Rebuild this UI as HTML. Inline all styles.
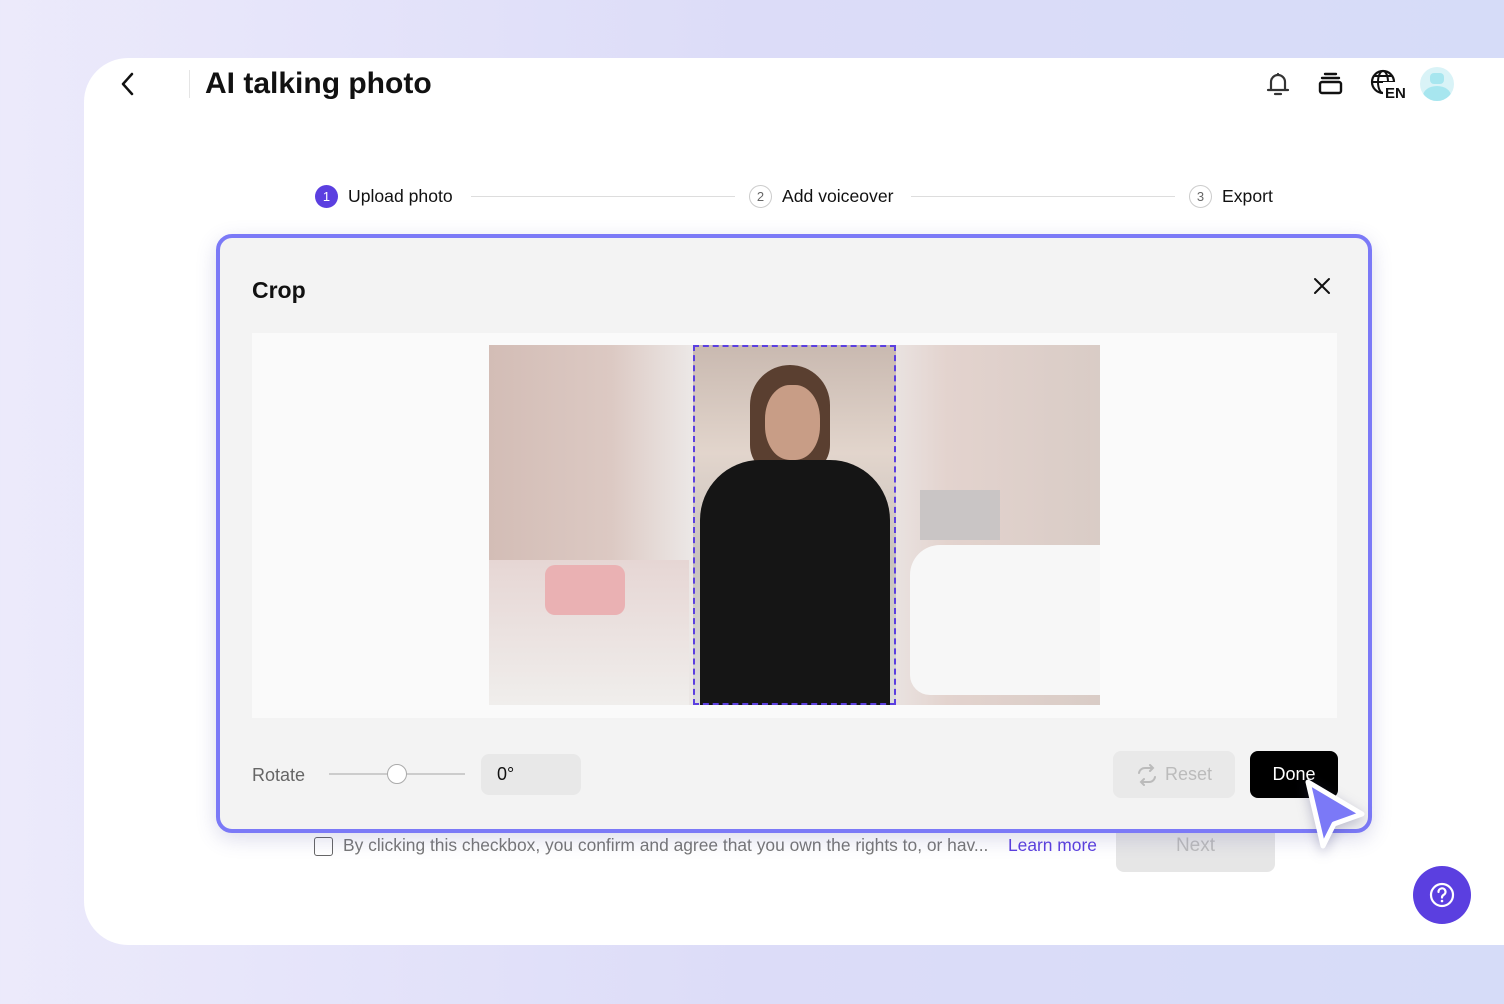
<!DOCTYPE html>
<html><head><style>
*{margin:0;padding:0;box-sizing:border-box}
body{width:1504px;height:1004px;overflow:hidden;font-family:"Liberation Sans",sans-serif;background:linear-gradient(90deg,#eceafb,#dcdcf8 50%,#d6dcf8);position:relative}
.card{position:absolute;left:84px;top:58px;width:1440px;height:887px;background:#fff;border-radius:44px 0 0 44px}
.abs{position:absolute}
</style></head><body>
<div class="card"></div>
<svg class="abs" style="left:118px;top:70px" width="22" height="28"><path d="M14 4 L5 14 L14 24" stroke="#111" stroke-width="2.5" fill="none" stroke-linecap="round" stroke-linejoin="round"/></svg>
<div class="abs" style="left:189px;top:70px;width:1px;height:28px;background:#e5e5e5"></div>
<div class="abs" style="left:205px;top:67px;font-size:30px;font-weight:bold;color:#111">AI talking photo</div>
<svg class="abs" style="left:1264px;top:70px" width="28" height="28"><path d="M7 20 V12 a7 7 0 0 1 14 0 V20 H24 M4 20 H24 M11 24 H17 M14 4 V5" stroke="#333" stroke-width="2.2" fill="none" stroke-linecap="round"/></svg>
<svg class="abs" style="left:1318px;top:72px" width="26" height="24"><rect x="2" y="10" width="21" height="11" rx="2" stroke="#111" stroke-width="2.4" fill="none"/><path d="M4 6 H21 M7 2 H18" stroke="#111" stroke-width="2.4" stroke-linecap="round"/></svg>
<svg class="abs" style="left:1369px;top:68px" width="40" height="32"><circle cx="14" cy="14" r="11" stroke="#111" stroke-width="2.2" fill="none"/><ellipse cx="14" cy="14" rx="5" ry="11" stroke="#111" stroke-width="2" fill="none"/><path d="M3 14 H25 M5 8 H23" stroke="#111" stroke-width="2"/><rect x="14" y="14" width="26" height="18" fill="#fff"/><text x="16" y="30" font-family="Liberation Sans" font-weight="bold" font-size="15" fill="#111">EN</text></svg>
<div class="abs" style="left:1420px;top:67px;width:34px;height:34px;border-radius:50%;background:#d9f3f7;overflow:hidden"><div class="abs" style="left:10px;top:6px;width:14px;height:11px;border-radius:4px;background:#a7e6ef"></div><div class="abs" style="left:3px;top:19px;width:28px;height:20px;border-radius:50%;background:#a7e6ef"></div></div>

<div class="abs" style="left:315px;top:185px;width:23px;height:23px;border-radius:50%;background:#5b3fe0;color:#fff;font-size:13px;text-align:center;line-height:23px">1</div>
<div class="abs" style="left:348px;top:186px;font-size:17.6px;color:#111">Upload photo</div>
<div class="abs" style="left:471px;top:196px;width:264px;height:1px;background:#ddd"></div>
<div class="abs" style="left:749px;top:185px;width:23px;height:23px;border-radius:50%;border:1px solid #ccc;color:#666;font-size:13px;text-align:center;line-height:21px">2</div>
<div class="abs" style="left:782px;top:186px;font-size:17.6px;color:#111">Add voiceover</div>
<div class="abs" style="left:911px;top:196px;width:264px;height:1px;background:#ddd"></div>
<div class="abs" style="left:1189px;top:185px;width:23px;height:23px;border-radius:50%;border:1px solid #ccc;color:#666;font-size:13px;text-align:center;line-height:21px">3</div>
<div class="abs" style="left:1222px;top:186px;font-size:17.6px;color:#111">Export</div>

<div class="abs" style="left:314px;top:837px;width:19px;height:19px;border:1.5px solid #666;border-radius:3px"></div>
<div class="abs" style="left:343px;top:835px;font-size:17.4px;color:#777">By clicking this checkbox, you confirm and agree that you own the rights to, or hav...</div>
<div class="abs" style="left:1008px;top:835px;font-size:17.4px;color:#5b3fe0">Learn more</div>
<div class="abs" style="left:1116px;top:818px;width:159px;height:54px;border-radius:8px;background:#e6e6e6;color:#bbb;font-size:19px;text-align:center;line-height:56px">Next</div>

<div class="abs" style="left:216px;top:234px;width:1156px;height:599px;border:4px solid #7b79f7;border-radius:16px;background:#f3f3f3;box-shadow:0 6px 20px rgba(80,80,160,.2)"></div>
<div class="abs" style="left:252px;top:277px;font-size:23px;font-weight:bold;color:#111">Crop</div>
<svg class="abs" style="left:1312px;top:276px" width="20" height="20"><path d="M3 3 L17 17 M17 3 L3 17" stroke="#111" stroke-width="2" stroke-linecap="round"/></svg>
<div class="abs" style="left:252px;top:333px;width:1085px;height:385px;background:#fafafa"></div>
<div class="abs" style="left:489px;top:345px;width:611px;height:360px;background:linear-gradient(90deg,#d3bdb6 0%,#dcc9c3 20%,#eeeceb 35%,#eee 60%,#e3d3ce 75%,#d9ccc6 100%)"></div>
<div class="abs" style="left:489px;top:560px;width:200px;height:145px;background:linear-gradient(180deg,#e6d6d4,#f0eeec)"></div>
<div class="abs" style="left:545px;top:565px;width:80px;height:50px;border-radius:10px;background:#eab1b3"></div>
<div class="abs" style="left:910px;top:545px;width:190px;height:150px;border-radius:30px 0 0 20px;background:#f7f7f7"></div>
<div class="abs" style="left:920px;top:490px;width:80px;height:50px;background:#c9c5c5"></div>
<div class="abs" style="left:693px;top:345px;width:203px;height:360px;background:linear-gradient(180deg,#c9b9b0 0%,#e2d5cc 30%,#c8c2bd 60%,#ddd 100%)"></div>
<div class="abs" style="left:750px;top:365px;width:80px;height:110px;border-radius:40px 40px 30px 30px;background:#5a3f30"></div>
<div class="abs" style="left:765px;top:385px;width:55px;height:75px;border-radius:45%;background:#c89d86"></div>
<div class="abs" style="left:700px;top:460px;width:190px;height:245px;border-radius:60px 60px 0 0;background:#151515"></div>
<div class="abs" style="left:693px;top:345px;width:203px;height:360px;border:2px dashed #5b3fe0"></div>
<div class="abs" style="left:252px;top:765px;font-size:18px;color:#666">Rotate</div>
<div class="abs" style="left:329px;top:773px;width:136px;height:2px;background:#ccc"></div>
<div class="abs" style="left:387px;top:764px;width:20px;height:20px;border-radius:50%;background:#fff;border:1px solid #aaa"></div>
<div class="abs" style="left:481px;top:754px;width:100px;height:41px;border-radius:8px;background:#e8e8e8;font-size:18px;color:#111;padding:10px 16px">0°</div>
<div class="abs" style="left:1113px;top:751px;width:122px;height:47px;border-radius:8px;background:#e9e9e9;color:#bbb;font-size:18px;line-height:47px;padding-left:52px">Reset</div>
<svg class="abs" style="left:1134px;top:764px" width="26" height="22"><path d="M5 9 a6 6 0 0 1 6-5 H19 M16 1 L19 4 L16 7 M21 13 a6 6 0 0 1-6 5 H7 M10 15 L7 18 L10 21" stroke="#bbb" stroke-width="2" fill="none" stroke-linecap="round"/></svg>
<div class="abs" style="left:1250px;top:751px;width:88px;height:47px;border-radius:8px;background:#000;color:#fff;font-size:18px;line-height:47px;text-align:center">Done</div>
<svg class="abs" style="left:1296px;top:772px;filter:drop-shadow(0 4px 6px rgba(60,60,120,.3))" width="80" height="82"><path d="M12 10 L66 42 L38 52 L27 74 Z" fill="#7b79f7" stroke="#fff" stroke-width="5" stroke-linejoin="round"/></svg>
<div class="abs" style="left:1413px;top:866px;width:58px;height:58px;border-radius:50%;background:#5b3fe0"></div>
<svg class="abs" style="left:1428px;top:881px" width="28" height="28"><circle cx="14" cy="14" r="11" stroke="#fff" stroke-width="2.2" fill="none"/><path d="M10.5 11 a3.5 3.5 0 1 1 5 3 c-1 .6-1.5 1.2-1.5 2.5" stroke="#fff" stroke-width="2.2" fill="none" stroke-linecap="round"/><circle cx="14" cy="20" r="1.3" fill="#fff"/></svg>
</body></html>
